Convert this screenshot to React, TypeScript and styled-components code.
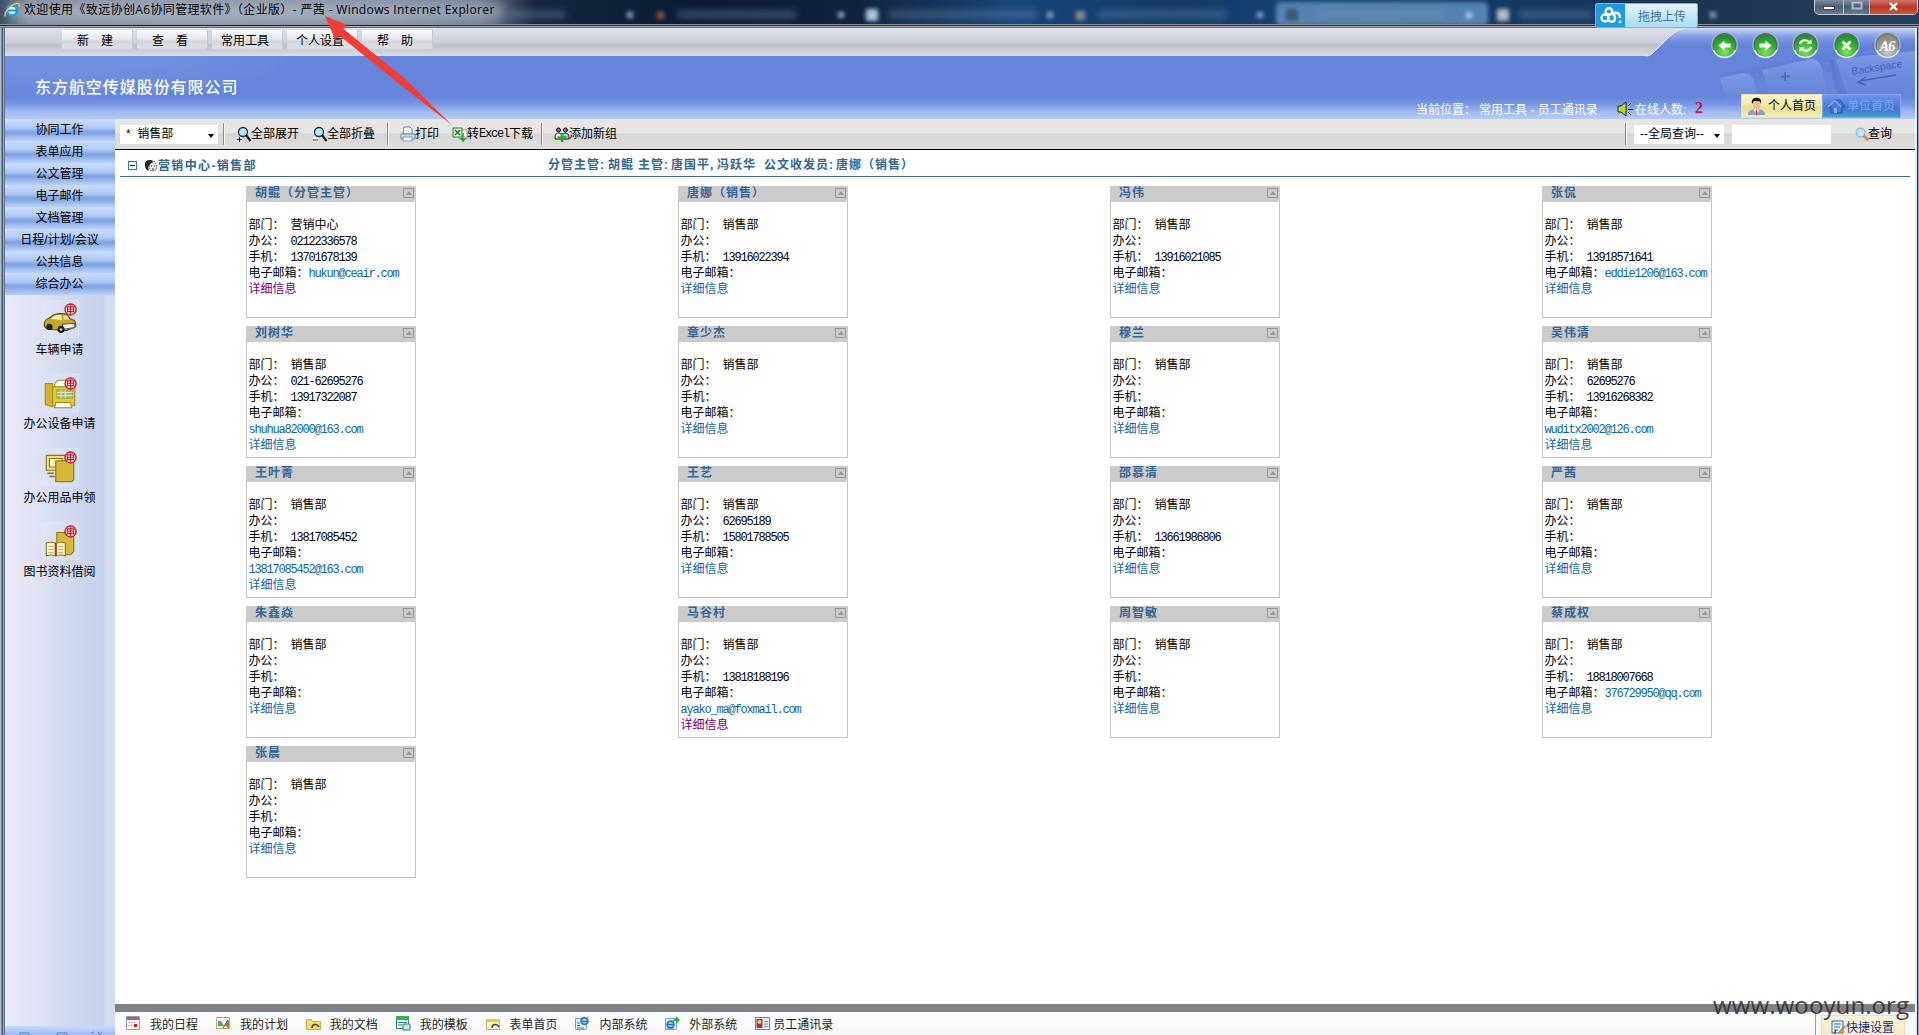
import React from "react";
import styled, { createGlobalStyle } from "styled-components";

const cjk = '"Liberation Sans", "Noto Sans CJK SC", sans-serif';

const GlobalStyle = createGlobalStyle`
  * { box-sizing: border-box; }
  body { margin: 0; overflow: hidden; background: #fff; font: 12px/16px ${cjk}; color: #000; }
`;

/* ---------- window frame ---------- */

const Window = styled.div`
  position: relative;
  display: flex;
  flex-direction: column;
  width: 1919px;
  height: 1035px;
  overflow: hidden;
  background: #fff;
`;

const TitleBar = styled.header`
  position: relative;
  flex: none;
  height: 24px;
  overflow: hidden;
  display: flex;
  align-items: center;
  background:
    linear-gradient(90deg, #3d4f66 0, #7f8b9b 30px, #8c97a8 180px, #838fa2 380px, #6d7a90 480px, #17263f 535px, #0d1c35 700px, #12233f 860px, #17457a 1010px, #133a69 1170px, #164273 1300px, #133863 1550px, #1d3552 1700px, #25405e 1919px);
`;

const TitleGlow = styled.div`
  position: absolute;
  left: 10px;
  top: 4px;
  width: 495px;
  height: 16px;
  border-radius: 8px;
  background: rgba(190, 198, 212, 0.55);
  filter: blur(6px);
`;

const TitleText = styled.div`
  position: relative;
  margin: -4px 0 0 4px;
  font: 12px/16px "Open Sans", "Noto Sans CJK SC", sans-serif;
  letter-spacing: 0.36px;
  white-space: pre;
`;

const GhostTab = styled.div<{ $x: number; $w: number; $lit?: boolean }>`
  position: absolute;
  left: ${(p) => p.$x}px;
  top: ${(p) => (p.$lit ? 2 : 10)}px;
  width: ${(p) => p.$w}px;
  height: ${(p) => (p.$lit ? 24 : 9)}px;
  border-radius: 5px;
  background: ${(p) => (p.$lit ? "#5583b1" : "rgba(120, 146, 176, 0.34)")};
  filter: blur(${(p) => (p.$lit ? 2 : 3)}px);
`;

const GhostIcon = styled.div<{ $x: number; $c: string; $s?: number }>`
  position: absolute;
  left: ${(p) => p.$x}px;
  top: ${(p) => 15 - (p.$s || 12) / 2}px;
  width: ${(p) => p.$s || 12}px;
  height: ${(p) => p.$s || 12}px;
  background: ${(p) => p.$c};
  filter: blur(2px);
`;

const Edge = styled.div`
  flex: none;
  height: 4px;
  background: linear-gradient(#8a9099 0 1px, #1d2633 1px 2px, #a5abb5 2px 3px, #686a73 3px 4px);
`;

const Body = styled.div`
  flex: 1;
  min-height: 0;
  display: flex;
`;

const LeftEdge = styled.div`
  width: 5px;
  background: linear-gradient(90deg, #aebdd0 0 1px, #7d90a8 1px 2px, #4b5b70 2px 3px, #8fa0b4 3px 4px, #66768a 4px 5px);
`;

const RightEdge = styled.div`
  width: 4px;
  background: linear-gradient(90deg, #f3f6fa 0 1px, #d8e6f3 1px 2px, #1d3048 2px 3px, #86a6c6 3px 4px);
`;

const Client = styled.div`
  flex: 1;
  display: flex;
  flex-direction: column;
  min-width: 0;
`;

/* ---------- banner ---------- */

const Banner = styled.div`
  position: relative;
  flex: none;
  height: 91px;
  background:
    radial-gradient(ellipse 240px 46px at 50px 26px, rgba(140, 170, 240, 0.3) 0 40%, rgba(140, 170, 240, 0.12) 90%, transparent 100%),
    linear-gradient(#6485da 0 66px, #6888dd 70px, #7797e4 76px, #a4bdf0 85px, #b6caf4 91px);
`;

const BannerArt = styled.svg`
  position: absolute;
  right: 0;
  top: 0;
`;

const BannerLayout = styled.div`
  position: relative;
  height: 100%;
  display: flex;
  justify-content: space-between;
`;

const BannerLeft = styled.div`
  width: 1400px;
`;

const MenuRow = styled.nav`
  display: flex;
  gap: 5px;
  height: 28px;
  padding: 2px 0 0 57px;
`;

const MenuItem = styled.button`
  width: 70px;
  height: 20px;
  padding: 2px 4px 0 0;
  border: 0;
  border-radius: 0 0 3px 3px;
  background: linear-gradient(#fafbfd, #e6e8ee 9px, #d3d6de 11px, #dcdee5 18px, #c8cbd6);
  box-shadow: 1px 0 0 #c4c8d1;
  font: 12px/18px ${cjk};
  white-space: pre;
`;

const Company = styled.div`
  margin: 18px 0 0 30px;
  font: 500 16px/24px "Noto Sans CJK SC", sans-serif;
  letter-spacing: 0.95px;
  color: #fff;
`;

const BannerRight = styled.div`
  width: 504px;
  display: flex;
  flex-direction: column;
  justify-content: space-between;
`;

const RoundRow = styled.div`
  display: flex;
  justify-content: flex-end;
  gap: 13.8px;
  padding: 3px 14px 0 0;
`;

const StatusRow = styled.div`
  display: flex;
  align-items: center;
  height: 25px;
  margin-bottom: 1px;
  padding-left: 5px;
  color: #fff;
  white-space: pre;
`;

const Place = styled.span`
  display: flex;
  width: 201px;
  padding-top: 8px;
`;

const PlaceLabel = styled.span`
  width: 63px;
`;

const Online = styled.span`
  padding: 8px 0 0 2px;
  width: 62px;
`;

const Count = styled.b`
  width: 46px;
  padding-top: 4px;
  font: bold 16px/18px "Liberation Serif", serif;
  color: #d3123c;
`;

const HomeTab = styled.button<{ $dim?: boolean }>`
  display: flex;
  align-items: center;
  gap: ${(p) => (p.$dim ? 1 : 2)}px;
  width: ${(p) => (p.$dim ? 79 : 81)}px;
  height: 24px;
  padding: 1px 0 0 ${(p) => (p.$dim ? 4 : 5)}px;
  font: 12px/24px ${cjk};
  white-space: nowrap;
  border: 1px solid ${(p) => (p.$dim ? "#84a8ea" : "#e9e3a8")};
  color: ${(p) => (p.$dim ? "#7fa5ee" : "#000")};
  background: ${(p) =>
    p.$dim
      ? "linear-gradient(#6d95ea, #4f7edb 45%, #4577d6 60%, #3f86d2 78%, #43a3c8)"
      : "linear-gradient(#fbf7cf, #f2eaa6 45%, #e9df8b 55%, #f5efb4)"};
`;

/* ---------- sidebar ---------- */

const Work = styled.div`
  flex: 1;
  min-height: 0;
  display: flex;
`;

const Side = styled.aside`
  width: 110px;
  display: flex;
  flex-direction: column;
  background: linear-gradient(90deg, #eaecf8 0, #d9def2 45px, #c6cfec 99px, #d4dbf4 100px, #d3daf4 110px);
`;

const SideItem = styled.div`
  height: 22px;
  padding-right: 1px;
  line-height: 23px;
  text-align: center;
  background: linear-gradient(#c9dafa, #b8cef7 7px, #a5c0f2 10px, #86a9e6 12px, #7fa3e3 14px, #a6c1f3 19px, #b9d0f8 22px);
`;

const SideShortcut = styled.div`
  display: flex;
  flex-direction: column;
  align-items: center;
  height: 74px;
  padding: 5px 1px 0 0;
  gap: 4px;
  line-height: 16px;

  svg { display: block; }
`;

const SideFoot = styled.div`
  height: 9px;
  margin-top: auto;
  overflow: hidden;
  background: linear-gradient(#c9dafa, #9dbaf0);
  svg { display: block; }
`;

/* ---------- main ---------- */

const Main = styled.main`
  flex: 1;
  display: flex;
  flex-direction: column;
  min-width: 0;
`;

const Toolbar = styled.div`
  display: flex;
  align-items: center;
  height: 31px;
  flex: none;
  padding-left: 5px;
  border-bottom: 1px solid #000;
  background: linear-gradient(#e6e5e3 0 14px, #d7d6d4 15px, #dfdedc 30px);
`;

const Select = styled.div<{ $w: number }>`
  display: flex;
  align-items: center;
  justify-content: space-between;
  width: ${(p) => p.$w}px;
  height: 19px;
  padding: 0 4px 0 6px;
  background: #fff;
  white-space: pre;

  &::after {
    content: "";
    margin-top: 3px;
    border: 3.5px solid transparent;
    border-top: 4px solid #000;
    border-bottom: 0;
  }
`;

const Sep = styled.i<{ $l: number; $r: number }>`
  width: 2px;
  height: 22px;
  margin: 0 ${(p) => p.$r}px 0 ${(p) => p.$l}px;
  border-left: 1px solid #8b8b8b;
  border-right: 1px solid #f5f5f5;
`;

const Tool = styled.span<{ $w: number }>`
  display: flex;
  align-items: center;
  width: ${(p) => p.$w}px;
  white-space: nowrap;
  svg { flex: none; margin-right: -1px; }
`;

const Latin = styled.span`
  font: 12px/1 "Liberation Mono", monospace;
  letter-spacing: -1.2px;
`;

const Spacer = styled.div`
  flex: 1;
`;

const SearchBox = styled.div`
  width: 99px;
  height: 19px;
  margin: 0 24px 0 8px;
  background: #fff;
`;

const Content = styled.section`
  flex: 1;
  min-height: 0;
  background: #fff;
`;

const GroupHead = styled.div`
  display: flex;
  align-items: center;
  height: 27px;
  margin: 0 5px;
  padding: 4px 0 0 8px;
  border-bottom: 1px solid #3f6a90;
  font-weight: bold;
  color: #336690;
  letter-spacing: 1px;
`;

const Toggle = styled.i`
  display: flex;
  align-items: center;
  width: 9px;
  height: 9px;
  margin-right: 7px;
  border: 1px solid #2c7f93;
  &::after { content: ""; width: 5px; height: 1px; margin-left: 1px; background: #123; }
`;

const GroupName = styled.span`
  width: 390px;
  padding-top: 1px;
  letter-spacing: 1.35px;
  white-space: nowrap;
`;

const Managers = styled.span`
  display: flex;
  margin-top: -1px;
  white-space: pre;
`;

const Part = styled.span<{ $w: number }>`
  width: ${(p) => p.$w}px;
`;

const Cards = styled.div`
  display: grid;
  grid-template-columns: repeat(4, 432px);
  grid-auto-rows: 132px;
  row-gap: 8px;
  justify-items: center;
  padding-top: 9px;
`;

const Card = styled.article`
  width: 170px;
  border: 1px solid #c4c4c4;
  line-height: 16px;
`;

const CardHead = styled.div`
  display: flex;
  justify-content: space-between;
  height: 16px;
  margin: -1px -1px 15px;
  padding: 0 2px 0 9px;
  background: #cbcbcb;
  font-weight: bold;
  line-height: 14px;
  letter-spacing: 1px;
  color: #336699;
`;

const Collapse = styled.i`
  display: flex;
  align-items: center;
  justify-content: center;
  width: 11px;
  height: 10px;
  margin-top: 2px;
  border: 1px solid #989898;
  &::after {
    content: "";
    border: 3px solid transparent;
    border-bottom: 4px solid #999;
    border-top: 0;
  }
`;

const Line = styled.div`
  padding-left: 1.5px;
  height: 16px;
  white-space: pre;
`;

const Link = styled.a<{ $visited?: boolean }>`
  color: ${(p) => (p.$visited ? "#770077" : "#0e659c")};
`;

/* ---------- bottom bar ---------- */

const Splitter = styled.div`
  flex: none;
  height: 8px;
  background: #808285;
`;

const Dock = styled.footer`
  display: flex;
  flex: none;
  height: 23px;
  padding-left: 11px;
  background: linear-gradient(#f3f5fc, #fdfdfe 6px, #f7f7f7);
  color: #222;
`;

const DockItem = styled.span<{ $tight?: boolean }>`
  display: flex;
  align-items: center;
  gap: ${(p) => (p.$tight ? 3 : 9)}px;
  width: 89.9px;
  padding-top: 2px;
  white-space: nowrap;
  svg { margin-top: -3px; }
`;

const Quick = styled.div`
  width: 100px;
  margin-left: auto;
  padding: 3px 10px 0 5px;
  border-left: 1px solid #9a9aa2;
`;

const QuickButton = styled.div`
  display: flex;
  align-items: center;
  gap: 0;
  height: 26px;
  padding: 0 0 1px 9px;
  border: 1px solid #f3dcae;
  background: linear-gradient(#fdf3dc, #f6e7c4);
  color: #1c2f7c;
  white-space: nowrap;
`;

/* ---------- overlays ---------- */

const UploadTip = styled.div`
  position: absolute;
  left: 1595px;
  top: 3px;
  display: flex;
  width: 103px;
  height: 25px;
  border-radius: 2px;
  overflow: hidden;
  border: 1px solid #6db6e6;
  background: linear-gradient(#e3f5fe, #a9ddf7);
  color: #46749c;
  line-height: 27px;
  span { padding-left: 13px; }
`;

const WinButtons = styled.div`
  position: absolute;
  right: 1px;
  top: -3px;
  display: flex;
  height: 18px;
  border: 1px solid #c3ccd6;
  border-radius: 0 0 5px 5px;
  overflow: hidden;
`;

const WinButton = styled.div<{ $w: number; $close?: boolean }>`
  display: flex;
  align-items: center;
  justify-content: center;
  width: ${(p) => p.$w}px;
  border-right: ${(p) => (p.$close ? 0 : 1)}px solid #b5bfca;
  background: ${(p) => (p.$close ? "linear-gradient(#d9897c, #b8392b 55%, #cf5339)" : "linear-gradient(#8c9aab, #4d5f76 55%, #6b7c92)")};
`;

const Arrow = styled.svg`
  position: absolute;
  left: 310px;
  top: 8px;
`;

const Watermark = styled.div`
  position: absolute;
  left: 1713px;
  top: 988px;
  font: 24.2px/34px "Open Sans", sans-serif;
  color: rgba(40, 40, 40, 0.85);
  white-space: nowrap;
`;

/* ---------- drawings ---------- */

const IELogo = () => (
  <svg width="16" height="16" viewBox="0 0 16 16">
    <circle cx="8" cy="8.5" r="5" fill="#d8f0fb" stroke="#249bd7" strokeWidth="2.6" />
    <path d="M4 8.5h8.5" stroke="#249bd7" strokeWidth="2" />
    <path d="M1.5 14.5C-1 11 8 1 14 1.4c1.8.2 1.3 2.2.6 3.4" fill="none" stroke="#f0c63c" strokeWidth="1.4" />
  </svg>
);

const LogoWrap = styled.div`
  position: relative;
  margin: -4px 0 0 4px;
  height: 16px;
`;

type Glyph = "back" | "next" | "reload" | "stop" | "brand";
const RoundIcon = ({ kind }: { kind: Glyph }) => (
  <svg width="27" height="28" viewBox="0 0 27 28">
    <defs>
      <radialGradient id={`orb-${kind}`} cx="50%" cy="80%" r="75%">
        <stop offset="0" stopColor={kind === "brand" ? "#c9c9c9" : "#7be85a"} />
        <stop offset=".6" stopColor={kind === "brand" ? "#9b9b9b" : "#36b02f"} />
        <stop offset="1" stopColor={kind === "brand" ? "#858585" : "#1c8f26"} />
      </radialGradient>
    </defs>
    <circle cx="13.5" cy="14" r="13.3" fill="#a9b3c6" />
    <circle cx="13.5" cy="14" r="12" fill={kind === "brand" ? "#77787e" : "#54697a"} />
    <circle cx="13.5" cy="14.5" r="10.8" fill={`url(#orb-${kind})`} />
    <path d="M2.5 19a12 12 0 0 0 22 0" fill="none" stroke="#dfe9ee" strokeWidth="1.5" />
    {kind === "back" && <path d="M7.5 14.5l6-5v3h6v4h-6v3z" fill="#fff" />}
    {kind === "next" && <path d="M19.5 14.5l-6-5v3h-6v4h6v3z" fill="#fff" />}
    {kind === "stop" && <path d="M9.5 10.5l8 8M17.5 10.5l-8 8" stroke="#fff" strokeWidth="2.6" />}
    {kind === "reload" && (
      <g fill="none" stroke="#fff" strokeWidth="2.2">
        <path d="M8 13c1-4 6-5 9-2M19 16c-1 4-6 5-9 2" />
        <path d="M19.5 8v5h-5zM7.5 21v-5h5z" fill="#fff" stroke="none" />
      </g>
    )}
    {kind === "brand" && (
      <text x="13" y="19.5" textAnchor="middle" fontFamily="Liberation Serif, serif" fontStyle="italic" fontWeight="bold" fontSize="14" letterSpacing="-1" fill="#fff">A6</text>
    )}
  </svg>
);

const Magnifier = ({ sign }: { sign?: "+" | "-" }) => (
  <svg width="16" height="17" viewBox="0 0 16 17">
    <circle cx="7" cy="6" r="4.5" fill="#b5e6f5" stroke="#1f3347" strokeWidth="1.3" />
    <path d="M10 9l4.5 6" stroke="#14202c" strokeWidth="2.2" />
    <path d="M1 13.5h5" stroke="#fff" strokeWidth="4" />
    <path d={sign === "+" ? "M1 13.5h5M3.5 11v5" : "M1 14h5"} stroke="#222" />
  </svg>
);

const Printer = () => (
  <svg width="16" height="16" viewBox="0 0 16 16">
    <path d="M4 1h6l2 2v5H3z" fill="#fff" stroke="#5d82b4" />
    <path d="M1 8h14v5H1z" fill="#ccd8e8" stroke="#6d87a9" />
    <path d="M3 11h9v4H3z" fill="#fff" stroke="#7e95b3" />
  </svg>
);

const Excel = () => (
  <svg width="16" height="16" viewBox="0 0 16 16">
    <path d="M7 4h8v9H7z" fill="#fff" stroke="#8aa58a" />
    <path d="M1 2h9v9H1z" fill="#e4f3e0" stroke="#2f7c34" />
    <path d="M3 4l5 5M8 4L3 9" stroke="#1f7a2a" strokeWidth="1.5" />
    <path d="M11 7v7M8.5 11.5L11 15l2.5-3.5" fill="none" stroke="#2e9d33" strokeWidth="1.6" />
  </svg>
);

const AddGroup = () => (
  <svg width="16" height="16" viewBox="0 0 16 16">
    <g fill="#fff" stroke="#111">
      <path d="M1 13c0-4 1-6 3.5-6S8 9 8 13z" />
      <path d="M8 13c0-4 1-6 3.5-6s3.5 2 3.5 6z" fill="#8fd3ee" />
      <circle cx="4.5" cy="4" r="2" fill="#777" />
      <circle cx="11.5" cy="4" r="2" fill="#777" />
    </g>
    <path d="M8 7v9M3.5 11.5h9" stroke="#2fae2b" strokeWidth="2.6" />
  </svg>
);

const Head = () => (
  <svg width="14" height="13" viewBox="0 0 14 13">
    <path d="M5 1C2 1 .5 4 1 7s2 4.500 4 4.500c-1-3-1-5 2-6L9 2C8 1 6.500.8 5 1z" fill="#222" />
    <path d="M6 5l4-3 3 4-1 5-5 1-2-3z" fill="#e6e6e6" stroke="#555" strokeDasharray="1.5 1" />
    <path d="M7 7h1M10 7h1M8 10h2" stroke="#333" />
  </svg>
);

const SearchGlass = () => (
  <svg width="14" height="14" viewBox="0 0 14 14">
    <path d="M8.5 8.5l4 4" stroke="#c98a4c" strokeWidth="2.6" strokeLinecap="round" />
    <circle cx="5.5" cy="5.5" r="4.4" fill="#c4e2fa" stroke="#8fb6dc" strokeWidth="1.2" />
  </svg>
);

const Speaker = () => (
  <svg width="16" height="16" viewBox="0 0 16 16">
    <path d="M1 5h3l5-4v14l-5-4H1z" fill="#b8dc2a" stroke="#223" />
    <path d="M11 5l3-3M11 8.5h5M11 11l3 3" stroke="#122" />
  </svg>
);

const SpeakerWrap = styled.span`
  display: flex;
  padding-top: 6px;
`;

const Person = () => (
  <svg width="19" height="19" viewBox="0 0 19 19">
    <path d="M1 18c0-4 2-5.5 8.5-6 6.5.5 8.5 2 8.5 6z" fill="#8ba3c6" />
    <path d="M6.5 12h6l-3 6z" fill="#fff" />
    <path d="M9.5 13v5" stroke="#cc3545" strokeWidth="1.6" />
    <path d="M5.5 5c0 5 1.5 8 4 8s4-3 4-8z" fill="#f0bd92" />
    <path d="M5 7C4 2 7 .5 10 .8s5 2 4 6.2L13 4.5 7 4z" fill="#1a1a1e" />
  </svg>
);

const House = () => (
  <svg width="19" height="17" viewBox="0 0 19 17">
    <path d="M1 9l7-7h5l5 7h-3v6H4V9z" fill="#4a77cf" stroke="#2a55ad" />
    <path d="M1 9l7-6.5L14 9" fill="none" stroke="#84a9ee" strokeWidth="1.2" />
    <path d="M7 15v-5h3v5" fill="#8fb2f2" />
  </svg>
);

const Stamp = () => (
  <g>
    <circle cx="28" cy="9" r="5.2" fill="#fff0f0" stroke="#c4162c" strokeWidth="1.3" />
    <path d="M25 6.5h6v4.5h-6zM25 8.7h6M28 4.5v9" fill="none" stroke="#c4162c" />
  </g>
);

const SideIcon = ({ kind }: { kind: number }) => (
  <svg width="38" height="38" viewBox="0 0 36 36">
    <rect x=".5" y=".5" width="35" height="35" fill="#fff" fillOpacity=".12" stroke="#d6e6fa" />
    {kind === 0 && (
      <g>
        <path d="M3 23c0-4 2-5 5-6l4-3c5-1.5 9-1.5 13 0l3 4c4 1 5 2 5 7l-9 4-14-1c-4 0-7-1-7-5z" fill="#c7a62c" stroke="#5a4a12" />
        <path d="M9 18l4-3c3-1 5-1 6-1l1 5z" fill="#f3eec2" />
        <path d="M21 14.5l4 .5 2 3.5h-5z" fill="#e7dd9c" />
        <path d="M20 23l12-1v4l-11 2z" fill="#eee" stroke="#555" />
        <circle cx="8" cy="25.5" r="3" fill="#222" />
        <circle cx="19" cy="28" r="3.3" fill="#1a1a1a" />
        <circle cx="19" cy="28" r="1.3" fill="#ccc" />
      </g>
    )}
    {kind === 1 && (
      <g stroke="#a98b17">
        <path d="M13 9l3-3h12v9H13z" fill="#fff" />
        <path d="M10 12h22v18H10z" fill="#e2c945" />
        <path d="M4 9h7v22l-7-2z" fill="#d4b52b" />
        <path d="M15 15h15v8H15z" fill="#8bbf8d" strokeWidth=".6" />
        <path d="M15 17.5h15M15 20.5h15M19 15v8M23 15v8" stroke="#e9e29a" />
        <path d="M14 27h14l1 5H13z" fill="#fff" />
      </g>
    )}
    {kind === 2 && (
      <g stroke="#8d7313">
        <path d="M5 7h18v14H5z" fill="#f4df7a" />
        <path d="M8 10h12v8H8z" fill="#fdf6cc" />
        <path d="M14 12h17v18l-2 2H14z" fill="#d5b936" />
        <path d="M6 24h6M8 27h5" strokeWidth="1.4" />
      </g>
    )}
    {kind === 3 && (
      <g stroke="#8d7313">
        <path d="M15 10h16v18l-3 3H15z" fill="#d5b936" />
        <path d="M5 20c3-1.5 6-1 9 0v12c-3-1-6-1-9 0zM14 20c3-1 6-1.5 9 0v12c-3-1-6-1-9 0z" fill="#fbf3d2" />
        <path d="M7 23h5M7 26h5M7 29h5M16 23h5M16 26h5M16 29h5" stroke="#d9b36b" />
        <path d="M14 20v12" stroke="#8a4a16" strokeWidth="2" />
      </g>
    )}
    <Stamp />
  </svg>
);

const DockIcon = ({ kind }: { kind: number }) => (
  <svg width="15" height="15" viewBox="0 0 15 15">
    {kind === 0 && (
      <g>
        <path d="M.5 .5h13v13H.5z" fill="#fff" stroke="#99a" />
        <path d="M1 1h12v3H1z" fill="#a8607a" />
        <path d="M2 6.5h10M2 9.5h6" stroke="#aab4cc" strokeDasharray="2 1" />
        <path d="M8 8h3v3H8z" fill="#c22" />
      </g>
    )}
    {kind === 1 && (
      <g>
        <path d="M.5 1.5h13v11H.5z" fill="#eef6ee" stroke="#c2aa56" />
        <path d="M2 10V5h3l3 5z" fill="#4d9f86" />
        <path d="M13 4l-4 5 4 4z" fill="#a97a30" />
        <path d="M12 4l-5 8" stroke="#444" />
      </g>
    )}
    {(kind === 2 || kind === 4) && (
      <g>
        <path d={kind === 2 ? "M.5 3.5h5l1 2h8v8H.5z" : "M.5 3.5h13v10H.5z"} fill={kind === 2 ? "#f4df6d" : "#fff6d8"} stroke="#c9ab48" />
        {kind === 4 && <path d="M0 3h14v3H0z" fill="#e9c93d" />}
        <path d="M6 12c0-4 5-5 7-1" fill="none" stroke="#59391c" strokeWidth="1.6" />
      </g>
    )}
    {kind === 3 && (
      <g>
        <path d="M.5.5h12v12H.5z" fill="#e9f5f0" stroke="#377d86" />
        <path d="M0 0h13v4H0z" fill="#42a94e" />
        <path d="M2 6.5h9M2 9h4" stroke="#377d86" />
        <path d="M7 8h7v6H7z" fill="#c8e8e3" stroke="#377d86" />
      </g>
    )}
    {(kind === 5 || kind === 6) && (
      <g>
        <path d="M.5 2.5h11v11H.5z" fill="#eaf3fc" stroke="#7ba3cc" />
        <path d="M2 7h3M2 9.5h3M2 12h7" stroke="#3c6f9f" />
        <circle cx={kind === 5 ? 9.5 : 5.5} cy={kind === 5 ? 5 : 8.5} r="3.4" fill="#9fd2f4" stroke="#2076b8" strokeWidth="1.7" />
        <path d={kind === 5 ? "M6.5 5.5h6" : "M2.5 8.5h6"} stroke="#2076b8" strokeWidth="1.3" />
        {kind === 5 ? <path d="M6 8c0-4 4-7 8-7" stroke="#75b54a" fill="none" /> : <path d="M7 6c1-3 3-3 4-3V0l4 4-4 4V5z" fill="#3baa35" />}
      </g>
    )}
    {kind === 7 && (
      <g>
        <path d="M.5 1.5h14v12H.5z" fill="#dfecfa" stroke="#5b8bc2" />
        <path d="M1.5 3h6v9h-6z" fill="#a43a28" />
        <circle cx="4.5" cy="6" r="2" fill="#f1c199" />
        <path d="M9 5.5h4M9 8h4M9 10.5h4" stroke="#6f95c4" />
      </g>
    )}
  </svg>
);

/* ---------- data ---------- */

const menus = ["新　建", "查　看", "常用工具", "个人设置", "帮　助"];
const modules = ["协同工作", "表单应用", "公文管理", "电子邮件", "文档管理", "日程/计划/会议", "公共信息", "综合办公"];
const shortcuts = ["车辆申请", "办公设备申请", "办公用品申领", "图书资料借阅"];
const dock = ["我的日程", "我的计划", "我的文档", "我的模板", "表单首页", "内部系统", "外部系统", "员工通讯录"];

type Contact = { name: string; dept?: string; office?: string; mobile?: string; mail?: string; wrap?: boolean; seen?: boolean };
const contacts: Contact[] = [
  { name: "胡鲲（分管主管）", dept: "营销中心", office: "02122336578", mobile: "13701678139", mail: "hukun@ceair.com", seen: true },
  { name: "唐娜（销售）", mobile: "13916022394" },
  { name: "冯伟", mobile: "13916021085" },
  { name: "张侃", mobile: "13918571641", mail: "eddie1206@163.com" },
  { name: "刘树华", office: "021-62695276", mobile: "13917322087", mail: "shuhua82000@163.com", wrap: true },
  { name: "章少杰" },
  { name: "穆兰" },
  { name: "吴伟清", office: "62695276", mobile: "13916268382", mail: "wuditx2002@126.com", wrap: true },
  { name: "王叶菁", mobile: "13817085452", mail: "13817085452@163.com", wrap: true },
  { name: "王艺", office: "62695189", mobile: "15801788505" },
  { name: "邵慕清", mobile: "13661986806" },
  { name: "严茜" },
  { name: "朱鑫焱" },
  { name: "马谷村", mobile: "13818188196", mail: "ayako_ma@foxmail.com", wrap: true, seen: true },
  { name: "周智敏" },
  { name: "蔡成权", mobile: "18818007668", mail: "376729950@qq.com" },
  { name: "张晨" },
];

const ContactCard = ({ c }: { c: Contact }) => {
  const mail = c.mail && <Link><Latin>{c.mail}</Latin></Link>;
  return (
    <Card>
      <CardHead>{c.name}<Collapse /></CardHead>
      <Line>部门：<Latin> </Latin>{c.dept || "销售部"}</Line>
      <Line>办公：<Latin> {c.office}</Latin></Line>
      <Line>手机：<Latin> {c.mobile}</Latin></Line>
      <Line>电子邮箱：{!c.wrap && mail}</Line>
      {c.wrap && <Line>{mail}</Line>}
      <Line><Link $visited={c.seen}>详细信息</Link></Line>
    </Card>
  );
};

const ghostTabs = [[508, 58], [677, 120], [888, 150], [1097, 130], [1315, 130], [1518, 75]];
const ghostClose = [627, 838, 1047, 1257, 1710];

export default function App() {
  return (
    <Window>
      <GlobalStyle />
      <TitleBar>
        <TitleGlow />
        <GhostTab $x={1276} $w={212} $lit />
        {ghostTabs.map(([x, w]) => <GhostTab key={x} $x={x} $w={w} />)}
        {ghostClose.map((x) => <GhostIcon key={x} $x={x} $s={6} $c="#8fa9c4" />)}
        <GhostIcon $x={1466} $s={6} $c="#a9cdf0" />
        <GhostIcon $x={657} $s={7} $c="#8a5a42" />
        <GhostIcon $x={866} $c="#a9c6e2" />
        <GhostIcon $x={1076} $s={9} $c="#8b8d90" />
        <GhostIcon $x={1286} $c="#3e566f" />
        <GhostIcon $x={1497} $c="#b5bdc4" />
        <LogoWrap><IELogo /></LogoWrap>
        <TitleText>欢迎使用《致远协创A6协同管理软件》（企业版）- 严茜 - Windows Internet Explorer</TitleText>
      </TitleBar>
      <Edge />
      <Body>
        <LeftEdge />
        <Client>
          <Banner>
            <BannerArt width="1910" height="91" viewBox="0 0 1910 91">
              <defs>
                <linearGradient id="steel" x1="0" y1="0" x2="0" y2="1">
                  <stop offset="0" stopColor="#dfe2ea" />
                  <stop offset=".52" stopColor="#cbced9" />
                  <stop offset=".62" stopColor="#bec2ce" />
                  <stop offset="1" stopColor="#d9dbe6" />
                </linearGradient>
                <linearGradient id="sheen" x1="0" y1="0" x2="0" y2="1">
                  <stop offset="0" stopColor="#cfdcfa" />
                  <stop offset="1" stopColor="#6485da" stopOpacity="0" />
                </linearGradient>
                <linearGradient id="keycap" x1="0" y1="0" x2="0" y2="1">
                  <stop offset="0" stopColor="#86a1e8" stopOpacity=".8" />
                  <stop offset="1" stopColor="#6b8bdd" stopOpacity=".2" />
                </linearGradient>
              </defs>
              <rect x="1640" width="270" height="20" fill="url(#sheen)" />
              <path d="M1712 46c40-5 90-22 198-36v30l-72 2-72 10z" fill="#5473c8" fillOpacity=".2" />
              <g fill="url(#keycap)">
                <path d="M1715 50l24-5c7 0 9 4 11 12l3 20-30 0z" />
                <path d="M1757 42l48-11c8 0 10 4 12 10l6 26-58 2z" />
                <path d="M1829 31l81-8v44h-70c-6-10-10-24-11-36z" />
              </g>
              <path d="M1823 32c6 10 4 22 10 35h10c-6-12-8-24-12-36z" fill="#4d6cc4" fillOpacity=".35" />
              <path d="M1780 44v9M1776 48.5h9" stroke="#4c6cc4" strokeWidth="2" />
              <text x="1847" y="47" transform="rotate(-9 1847 47)" fontFamily="Liberation Sans, sans-serif" fontSize="10.5" fill="#4464bd">Backspace</text>
              <path d="M1891 47l-36 6m6-4l-8 5 8 3" stroke="#4464bd" strokeWidth="1.4" fill="none" />
              <path d="M0 0h1682c-8 1-12 4-18 9l-13 13c-4 4-6 6-10 6H0z" fill="url(#steel)" />
              <path d="M1682 0c-8 1-12 4-18 9l-13 13c-4 4-6 6-10 6" fill="none" stroke="#e6edfb" />
            </BannerArt>
            <BannerLayout>
              <BannerLeft>
                <MenuRow>{menus.map((m) => <MenuItem key={m}>{m}</MenuItem>)}</MenuRow>
                <Company>东方航空传媒股份有限公司</Company>
              </BannerLeft>
              <BannerRight>
                <RoundRow>
                  <RoundIcon kind="back" /><RoundIcon kind="next" /><RoundIcon kind="reload" /><RoundIcon kind="stop" /><RoundIcon kind="brand" />
                </RoundRow>
                <StatusRow>
                  <Place><PlaceLabel>当前位置：</PlaceLabel>常用工具 - 员工通讯录</Place>
                  <SpeakerWrap><Speaker /></SpeakerWrap>
                  <Online>在线人数:</Online>
                  <Count>2</Count>
                  <HomeTab><Person />个人首页</HomeTab>
                  <HomeTab $dim><House />单位首页</HomeTab>
                </StatusRow>
              </BannerRight>
            </BannerLayout>
          </Banner>
          <Work>
            <Side>
              {modules.map((m) => <SideItem key={m}>{m}</SideItem>)}
              {shortcuts.map((s, i) => <SideShortcut key={s}><SideIcon kind={i} />{s}</SideShortcut>)}
              <SideFoot>
                <svg width="110" height="9" viewBox="0 0 110 9">
                  <path d="M15 9V7h9v2M52 9V7h10v2M86 7l3-1M93 6l2 3M97 6l-3 3" fill="none" stroke="#4d82c4" />
                </svg>
              </SideFoot>
            </Side>
            <Main>
              <Toolbar>
                <Select $w={98}>*  销售部</Select>
                <Sep $l={5} $r={11} />
                <Tool $w={76}><Magnifier sign="+" />全部展开</Tool>
                <Tool $w={64}><Magnifier sign="-" />全部折叠</Tool>
                <Sep $l={11} $r={11} />
                <Tool $w={52}><Printer />打印</Tool>
                <Tool $w={82}><Excel />转<Latin>Excel</Latin>下载</Tool>
                <Sep $l={7} $r={11} />
                <Tool $w={70}><AddGroup />添加新组</Tool>
                <Spacer />
                <Sep $l={0} $r={7} />
                <Select $w={90}>--全局查询--</Select>
                <SearchBox />
                <Tool $w={60}><SearchGlass />查询</Tool>
              </Toolbar>
              <Content>
                <GroupHead>
                  <Toggle />
                  <Head />
                  <GroupName>营销中心-销售部</GroupName>
                  <Managers>
                    <Part $w={60}>分管主管:</Part><Part $w={30}>胡鲲</Part><Part $w={33}>主管:</Part><Part $w={46}>唐国平,</Part>
                    <Part $w={47}>冯跃华</Part><Part $w={72}>公文收发员:</Part><Part $w={100}>唐娜（销售）</Part>
                  </Managers>
                </GroupHead>
                <Cards>{contacts.map((c) => <ContactCard key={c.name} c={c} />)}</Cards>
              </Content>
              <Splitter />
              <Dock>
                {dock.map((d, i) => <DockItem key={d} $tight={i === 7}><DockIcon kind={i} />{d}</DockItem>)}
                <Quick>
                  <QuickButton>
                    <svg width="15" height="15" viewBox="0 0 15 15">
                      <path d="M1 1h11v12H1z" fill="#e6f3fb" stroke="#23729c" />
                      <path d="M3 4h7M3 7h6M3 10h4" stroke="#23729c" />
                      <path d="M2 14l3-5v4z" fill="#1b6b3d" />
                      <path d="M8 13l6-7" stroke="#c38a2a" strokeWidth="2" />
                    </svg>
                    快捷设置
                  </QuickButton>
                </Quick>
              </Dock>
            </Main>
          </Work>
        </Client>
        <RightEdge />
      </Body>
      <UploadTip>
        <svg width="29" height="24" viewBox="0 0 29 24">
          <path d="M0 0h29v24H0z" fill="#1e9be2" />
          <g fill="none" stroke="#fff" strokeWidth="2.4">
            <circle cx="13" cy="7.5" r="3.3" />
            <circle cx="9" cy="14" r="3.5" />
            <path d="M12 16c3 3 7 2 7-2s-3-5-5-4M18 9c4-1 6 1 6 5" />
          </g>
          <circle cx="24" cy="18" r="1.4" fill="#fff" />
        </svg>
        <span>拖拽上传</span>
      </UploadTip>
      <WinButtons>
        <WinButton $w={29}><svg width="12" height="10"><rect x=".5" y="5.5" width="11" height="3" fill="#fff" stroke="#445" /></svg></WinButton>
        <WinButton $w={26}><svg width="12" height="10"><path d="M1.5 1.5h9v6h-9z" fill="none" stroke="#aeb8c3" strokeWidth="2" /></svg></WinButton>
        <WinButton $w={47} $close><svg width="12" height="12"><path d="M2 3l7 7M9 3l-7 7" stroke="#fff" strokeWidth="2.4" /></svg></WinButton>
      </WinButtons>
      <Arrow width="150" height="125" viewBox="0 0 150 125">
        <path d="M15 8L36 16.5 33.5 21 94 70 142.5 117.5 88 75 30 28 25 31z" fill="#f23c38" />
      </Arrow>
      <Watermark>www.wooyun.org</Watermark>
    </Window>
  );
}
